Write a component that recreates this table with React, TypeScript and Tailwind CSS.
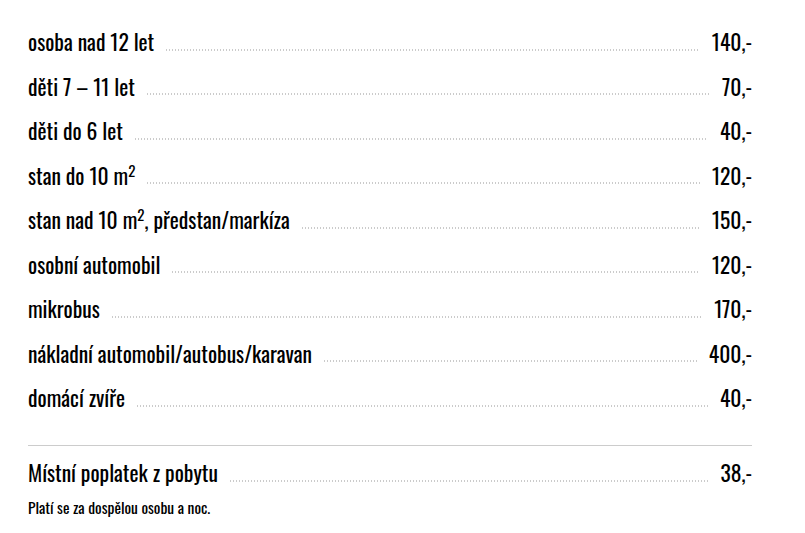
import React from "react";

const items: { label: React.ReactNode; price: string }[] = [
    { label: "osoba nad 12 let", price: "140,-" },
    { label: "děti 7 – 11 let", price: "70,-" },
    { label: "děti do 6 let", price: "40,-" },
    { label: <>stan do 10 m<sup className="text-[15px] -top-[8px]">2</sup></>, price: "120,-" },
    { label: <>stan nad 10 m<sup className="text-[15px] -top-[8px]">2</sup>, předstan/markíza</>, price: "150,-" },
    { label: "osobní automobil", price: "120,-" },
    { label: "mikrobus", price: "170,-" },
    { label: "nákladní automobil/autobus/karavan", price: "400,-" },
    { label: "domácí zvíře", price: "40,-" },
];

function Dots() {
    return (
        <div className="flex-1 mx-[12px] mb-[2px] h-[2px] bg-[linear-gradient(to_right,#cbcbcb_1.5px,transparent_1.5px)] bg-[length:3px_2px] bg-repeat-x" />
    );
}

function Row({ label, price, tall }: { label: React.ReactNode; price: string; tall?: string }) {
    return (
        <div className={`flex items-end text-[21.5px] ${tall ?? "h-[44.5px]"}`}>
            <span className="whitespace-nowrap leading-none">{label}</span>
            <Dots />
            <span className="whitespace-nowrap leading-none">{price}</span>
        </div>
    );
}

export default function App() {
    return (
        <div className="w-[805px] h-[533px] bg-white text-black px-[28px] pt-[8px] font-['Oswald','Open_Sans',sans-serif] font-stretch-condensed">
            <div className="w-[724px]">
                {items.map((it, i) => (
                    <Row key={i} label={it.label} price={it.price} />
                ))}

                <div className="mt-[36px] border-t border-[#cccccc]" />

                <Row label="Místní poplatek z pobytu" price="38,-" tall="h-[38px]" />

                <p className="mt-[16px] text-[15.5px] leading-none">Platí se za dospělou osobu a noc.</p>
            </div>
        </div>
    );
}
